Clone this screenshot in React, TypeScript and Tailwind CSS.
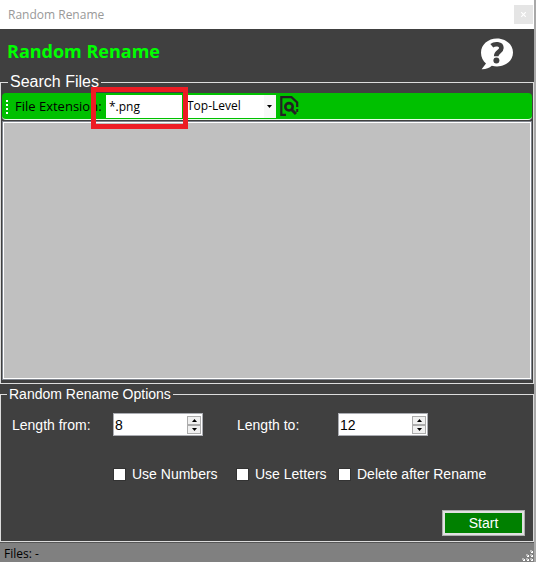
import { useState } from "react";

const UI = "font-['Open_Sans','Noto_Sans',sans-serif]";

function HelpIcon() {
  return (
    <svg width="34" height="34" viewBox="0 0 34 34" aria-hidden="true">
      <path
        d="M17 1.500C8 1.500 1 7.700 1 15.700c0 4.600 2.200 8.300 5 10.800L1.600 32.300c4 .2 7.700-1.200 10.200-3.500 1.600.4 3.400.7 5.200.7 9 0 16-6 16-13.900S26 1.500 17 1.500z"
        fill="#fff"
      />
      <path d="M11.800 8.800c2.800-2.300 9.600-2.400 9.600 2.200 0 3.800-5.200 3.400-5.200 8.200" fill="none" stroke="#404040" strokeWidth="4.600" />
      <circle cx="16.400" cy="23.600" r="3" fill="#404040" />
    </svg>
  );
}

function FindIcon() {
  return (
    <svg width="20" height="20" viewBox="0 0 20 20" fill="none" stroke="#222" aria-hidden="true">
      <path d="M6 18.900H1.300V1.100H11.500L17.200 6.500V11" strokeWidth="2.200" />
      <circle cx="9" cy="10.800" r="3.700" strokeWidth="2.600" />
      <path d="M11.500 13.500L16 18" strokeWidth="3" />
      <path d="M17.200 13V16" strokeWidth="2" />
    </svg>
  );
}

function Stepper({ id, label, initial }: { id: string; label: string; initial: number }) {
  const [value, setValue] = useState(initial);
  const arrow = "flex h-[9px] w-[14px] items-center justify-center bg-[#f0f0f0] outline outline-1 -outline-offset-1 outline-[#acacac]";
  return (
    <div className="flex items-center">
      <label htmlFor={id} className="w-[101px]">
        {label}
      </label>
      <div className="flex h-[23px] w-[90px] items-center border border-[#abadb3] bg-white pr-px">
        <input
          id={id}
          inputMode="numeric"
          value={value}
          onChange={(e) => setValue(Number(e.target.value) || 0)}
          className="h-full min-w-0 flex-1 bg-white pl-px text-black outline-none"
        />
        <div className="flex flex-col">
          <button aria-label={`Increase ${label}`} className={arrow} onClick={() => setValue(value + 1)}>
            <svg width="5" height="3" viewBox="0 0 5 3">
              <path d="M0 3L2.500 0L5 3z" />
            </svg>
          </button>
          <button aria-label={`Decrease ${label}`} className={arrow} onClick={() => setValue(value - 1)}>
            <svg width="5" height="3" viewBox="0 0 5 3">
              <path d="M0 0L2.500 3L5 0z" />
            </svg>
          </button>
        </div>
      </div>
    </div>
  );
}

function Check({ label }: { label: string }) {
  return (
    <label className="flex items-center gap-[6px]">
      <input
        type="checkbox"
        className="size-[13px] appearance-none border border-[#333] bg-white checked:bg-[#00c000]"
      />
      {label}
    </label>
  );
}

export default function App() {
  return (
    <div className="flex min-h-screen flex-col border-r-2 border-[#a8a8a8] bg-[#404040] font-['Liberation_Sans',Arial,sans-serif] text-sm text-white">
      <header className="flex h-[29px] items-center justify-between bg-white pr-px pl-2">
        <span className={`${UI} text-xs text-[#999]`}>Random Rename</span>
        <button aria-label="Close" className="flex size-[19px] items-center justify-center bg-[#e5e5e5]">
          <svg width="5" height="5" viewBox="0 0 5 5" stroke="#fff" strokeWidth="1.200">
            <path d="M0 0L5 5M5 0L0 5" />
          </svg>
        </button>
      </header>

      <div className="flex h-[43px] items-center justify-between pr-[20px] pl-[7px]">
        <h1 className={`${UI} text-lg font-bold text-[#00ff00]`}>Random Rename</h1>
        <button aria-label="Help" className="pt-[6px]">
          <HelpIcon />
        </button>
      </div>

      <fieldset className="min-w-0 border border-[#dcdcdc] px-px pt-px pb-[4px]">
        <legend className="ml-[6px] px-[2px] text-base leading-5">Search Files</legend>
        <div className={`${UI} relative flex h-[27px] items-center rounded-[4px] border-b border-[#e8ffe8] bg-[#00c000] pl-[3px] text-black`}>
          <svg width="4" height="15" viewBox="0 0 4 15" aria-hidden="true" className="mr-[6px]">
            <path d="M1 1h2v2H1zM1 5h2v2H1zM1 9h2v2H1zM1 13h2v2H1z" fill="#fff" />
          </svg>
          <label htmlFor="ext" className="w-[91px] text-[13px] whitespace-nowrap">
            File Extension:
          </label>
          <input id="ext" defaultValue="*.png" className="h-[23px] w-[76px] bg-white pl-[3px] text-xs outline-none" />
          <div className="relative ml-[5px] h-[23px] w-[89px] bg-white">
            <select aria-label="Search depth" className="h-full w-full appearance-none text-xs outline-none">
              <option>Top-Level</option>
              <option>All Directories</option>
            </select>
            <svg width="12" height="23" viewBox="0 0 12 23" aria-hidden="true" className="pointer-events-none absolute top-0 right-0">
              <path d="M0 0h12v23H0z" fill="#f8f8f8" />
              <path d="M3 10h5L5.500 13z" fill="#000" />
            </svg>
          </div>
          <button aria-label="Search" className="ml-[4px]">
            <FindIcon />
          </button>
          <div className="pointer-events-none absolute -top-[6px] left-[89px] h-[42px] w-[97px] border-[5px] border-[#ed1c24]" />
        </div>
        <div className="mx-px mt-[2px] min-h-[257px] border border-white bg-[#c0c0c0] outline outline-1 outline-[#828790]" />
      </fieldset>

      <fieldset className="mt-[2px] flex min-w-0 flex-col border border-[#dcdcdc] pr-2 pb-[5px]">
        <legend className="ml-[6px] px-[2px] leading-4">Random Rename Options</legend>
        <div className="flex gap-[34px] pt-[11px] pl-[11px]">
          <Stepper id="from" label="Length from:" initial={8} />
          <Stepper id="to" label="Length to:" initial={12} />
        </div>
        <div className="flex pt-[28px] pl-[112px] leading-5">
          <div className="w-[123px]">
            <Check label="Use Numbers" />
          </div>
          <div className="w-[102px]">
            <Check label="Use Letters" />
          </div>
          <Check label="Delete after Rename" />
        </div>
        <button className="mt-[26px] h-[26px] w-[83px] self-end border-[3px] border-[#e1e1e1] bg-[#008000] leading-5 outline outline-1 -outline-offset-1 outline-[#adadad]">
          Start
        </button>
      </fieldset>

      <footer className={`${UI} flex flex-1 items-center justify-between border-t border-[#555] bg-[#808080] pl-1 text-xs leading-4 text-black`}>
        <span className="pt-[2px]">Files: -</span>
        <svg width="12" height="12" viewBox="0 0 12 12" aria-hidden="true" className="self-end">
          <path d="M9 1h2v2H9zM5 5h2v2H5zM9 5h2v2H9zM1 9h2v2H1zM5 9h2v2H5zM9 9h2v2H9z" fill="#fff" />
          <path d="M8 0h2v2H8zM4 4h2v2H4zM8 4h2v2H8zM0 8h2v2H0zM4 8h2v2H4zM8 8h2v2H8z" fill="#b8b8b8" />
        </svg>
      </footer>
    </div>
  );
}
